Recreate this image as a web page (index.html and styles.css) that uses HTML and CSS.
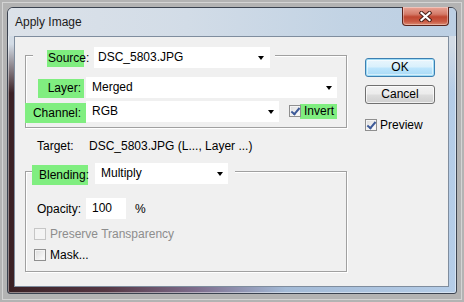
FILE: index.html
```html
<!DOCTYPE html>
<html>
<head>
<meta charset="utf-8">
<title>Apply Image</title>
<link rel="stylesheet" href="styles.css">
</head>
<body>
<div class="screen">
  <div class="window">
    <div class="titlebar">
      <span class="title">Apply Image</span>
      <div class="close">
        <svg width="13" height="11" viewBox="0 0 13 11">
          <path d="M2.5 2 L10.5 9 M10.5 2 L2.5 9" stroke="#4a2018" stroke-width="4.2" stroke-linecap="square"/>
          <path d="M2.5 2 L10.5 9 M10.5 2 L2.5 9" stroke="#ffffff" stroke-width="2.2" stroke-linecap="square"/>
        </svg>
      </div>
    </div>
    <div class="client">
      <div class="main">
        <div class="group g1">
          <div class="legend legend-1">
            <span class="hl hl-source">Source:</span>
            <div class="select sel-source sel-tight"><span>DSC_5803.JPG</span><i class="arrow"></i></div>
          </div>
          <div class="row row-layer">
            <span class="hl hl-layer">Layer:</span>
            <div class="select sel-layer"><span>Merged</span><i class="arrow"></i></div>
          </div>
          <div class="row row-channel">
            <span class="hl hl-channel">Channel:</span>
            <div class="select sel-channel"><span>RGB</span><i class="arrow"></i></div>
            <span class="check checked cb-invert"></span>
            <span class="hl hl-invert">Invert</span>
          </div>
        </div>
        <div class="target">
          <span class="target-label">Target:</span>
          <span class="target-value">DSC_5803.JPG (L..., Layer ...)</span>
        </div>
        <div class="group g2">
          <div class="legend legend-2">
            <span class="hl hl-blend">Blending:</span>
            <div class="select sel-blend"><span>Multiply</span><i class="arrow"></i></div>
          </div>
          <div class="row row-opacity">
            <span class="op-label">Opacity:</span>
            <div class="input">100</div>
            <span class="pct">%</span>
          </div>
          <div class="row row-check row-preserve">
            <span class="check disabled"></span>
            <span class="check-text muted">Preserve Transparency</span>
          </div>
          <div class="row row-check row-mask">
            <span class="check"></span>
            <span class="check-text">Mask...</span>
          </div>
        </div>
      </div>
      <div class="side">
        <div class="btn btn-default">OK</div>
        <div class="btn btn-cancel">Cancel</div>
        <div class="preview">
          <span class="check checked"></span>
          <span class="check-text">Preview</span>
        </div>
      </div>
    </div>
  </div>
</div>
</body>
</html>
```

FILE: styles.css
```css
* { box-sizing: border-box; }
html, body { margin: 0; padding: 0; }
body {
  width: 464px;
  height: 302px;
  overflow: hidden;
  font-family: "Liberation Sans", Arial, sans-serif;
  font-size: 12px;
  color: #000;
}
.screen {
  width: 464px;
  height: 302px;
  background: #b3b3b3;
  padding: 7px 7px 8px 7px;
  box-shadow: inset 0 0 0 2px #b3b3b3, inset 0 0 0 3px #d4d4d4;
}
.window {
  width: 450px;
  height: 287px;
  border: 1px solid #3b4350;
  border-radius: 6px 6px 3px 3px;
  display: flex;
  flex-direction: column;
  padding: 0 7px 6px 6px;
  background:
    linear-gradient(to bottom, #d3dce6 0, #d3dce6 36px, rgba(211,220,230,0) 85px),
    linear-gradient(to right, #3a2024 0%, #553744 22%, #7d6c8c 42%, #a3bad6 62%, #b5cde8 100%);
  box-shadow: inset 0 0 0 1px rgba(255,255,255,0.45);
}
.titlebar {
  height: 28px;
  display: flex;
  justify-content: space-between;
  align-items: flex-start;
  margin: 0 -7px 0 -6px;
  padding: 0 7px 0 7px;
  border-radius: 5px 5px 0 0;
  background: linear-gradient(to right, #dce2e9 0%, #d2dce7 40%, #c2d3e4 75%, #bccfe3 100%);
}
.title {
  margin-top: 7px;
  line-height: 15px;
  color: #1b1b1b;
}
.close {
  width: 47px;
  height: 19px;
  margin-top: -1px;
  border: 1px solid #5a241c;
  border-top: none;
  border-radius: 0 0 4px 4px;
  background: linear-gradient(to bottom, #e9a597 0%, #d47a68 40%, #bf4630 55%, #c95a44 80%, #dc8a70 100%);
  box-shadow: inset 0 0 0 1px rgba(255,255,255,0.35);
  display: flex;
  align-items: center;
  justify-content: center;
}
.close svg { display: block; }

.client {
  flex: 1;
  display: flex;
  background: #f0f0f0;
  border: 1px solid #7f8d9e;
}
.main {
  padding-left: 10px;
  display: flex;
  flex-direction: column;
}
.group {
  width: 322px;
  border: 1px solid #a0a0a0;
  box-shadow: inset 1px 1px 0 #fff, 1px 1px 0 #fff;
  display: flex;
  flex-direction: column;
  align-items: flex-start;
}
.g1 { margin-top: 18px; height: 73px; }
.g2 { margin-top: 17px; height: 101px; }

.legend {
  display: flex;
  align-items: flex-start;
  height: 21px;
  margin-top: -9px;
  background: #f0f0f0;
}
.legend-1 { margin-left: 7px; padding: 0 5px 0 14px; }
.legend-2 { margin-left: 6px; padding: 0 7px 0 0; }

.hl {
  background: #80ee80;
  white-space: nowrap;
  flex: none;
}
.hl-source { width: 37px; height: 17px; margin-top: 3px; line-height: 17px; padding-left: 1px; }
.hl-layer { width: 46px; height: 19px; margin-top: 2px; line-height: 19px; text-align: right; padding-right: 3px; margin-left: 12px; }
.hl-channel { width: 61px; height: 20px; margin-top: 2px; line-height: 20px; text-align: right; padding-right: 5px; margin-left: -1px; }
.hl-invert { width: 37px; height: 15px; margin-top: 3px; line-height: 15px; padding-left: 4px; margin-left: -1px; }
.hl-blend { width: 56px; height: 20px; margin-top: 2px; line-height: 20px; padding-left: 7px; }

.select {
  height: 21px;
  background: #fff;
  display: flex;
  align-items: center;
  justify-content: space-between;
  padding: 0 5px 0 6px;
  flex: none;
}
.sel-tight { padding-left: 4px; padding-right: 6px; }
.select span { line-height: 21px; }
.arrow {
  width: 0;
  height: 0;
  border-left: 3.5px solid transparent;
  border-right: 3.5px solid transparent;
  border-top: 4px solid #000;
  margin-top: 1px;
}
.sel-source { width: 176px; margin-left: 10px; }
.sel-layer { width: 251px; margin-left: 2px; }
.sel-channel { width: 193px; }
.sel-blend { width: 133px; margin-left: 7px; }

.row { display: flex; align-items: flex-start; }
.row-layer { margin-top: 9px; }
.row-channel { margin-top: 3px; height: 21px; }

.check {
  width: 12px;
  height: 12px;
  flex: none;
  border: 1px solid #8f8f8f;
  background: linear-gradient(135deg, #dcdcdc 0%, #f4f4f4 70%, #ffffff 100%);
  box-shadow: inset 0 0 0 1px #f4f4f4;
  position: relative;
}
.check.checked::after {
  content: "";
  position: absolute;
  left: 3px;
  top: 0px;
  width: 3px;
  height: 7px;
  border-right: 2px solid #3d5a98;
  border-bottom: 2px solid #3d5a98;
  transform: rotate(40deg);
}
.check.disabled {
  border-color: #c6c6c6;
  background: #f4f4f4;
  box-shadow: none;
}
.cb-invert { margin-left: 10px; margin-top: 4px; }

.target {
  margin-top: 11px;
  line-height: 15px;
  display: flex;
  white-space: nowrap;
}
.target-label { margin-left: 12px; width: 52px; }

.row-opacity { margin-top: 14px; align-items: center; height: 21px; }
.op-label { margin-left: 11px; width: 49px; }
.input {
  width: 40px;
  height: 21px;
  background: #fff;
  line-height: 21px;
  padding-left: 6px;
}
.pct { margin-left: 9px; }

.row-check { align-items: center; height: 12px; margin-left: 8px; }
.row-preserve { margin-top: 9px; }
.row-mask { margin-top: 9px; }
.check-text { margin-left: 4px; line-height: 15px; white-space: nowrap; }
.muted { color: #8d8d8d; }

.side {
  margin-left: 18px;
  display: flex;
  flex-direction: column;
  align-items: flex-start;
}
.btn {
  width: 70px;
  height: 19px;
  border-radius: 3px;
  text-align: center;
  line-height: 17px;
  font-size: 12px;
}
.btn-default {
  margin-top: 21px;
  border: 1px solid #3c7fb1;
  background: linear-gradient(to bottom, #eaf6fd 0%, #d9f0fc 48%, #bee6fd 52%, #a7d9f5 100%);
  box-shadow: inset 0 0 0 1px #9fdcf6, inset 0 0 0 2px rgba(255,255,255,0.5);
}
.btn-cancel {
  margin-top: 8px;
  border: 1px solid #707070;
  background: linear-gradient(to bottom, #f2f2f2 0%, #ebebeb 48%, #dddddd 52%, #cfcfcf 100%);
  box-shadow: inset 0 0 0 1px rgba(255,255,255,0.7);
}
.preview {
  margin-top: 15px;
  display: flex;
  align-items: center;
  height: 12px;
}
.preview .check-text { margin-left: 3px; }
```
